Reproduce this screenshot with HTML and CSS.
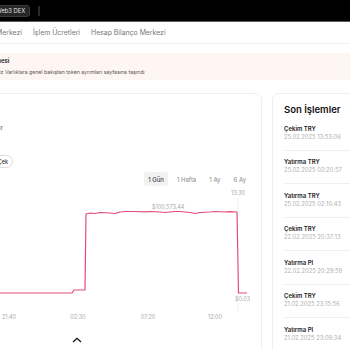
FILE: index.html
```html
<!DOCTYPE html>
<html lang="tr">
<head>
  <meta charset="UTF-8" />
  <title>Varlıklar</title>
  <link rel="stylesheet" href="styles.css">
</head>
<body>
  <!-- üst bar -->
  <header class="topbar">
    <button class="dex-btn">Web3 DEX</button>
    <span class="topbar-divider"></span>
  </header>

  <!-- sekmeler -->
  <nav class="tabs">
    <a href="#">Varlık Merkezi</a>
    <a href="#">İşlem Ücretleri</a>
    <a href="#">Hesap Bilanço Merkezi</a>
  </nav>

  <!-- bilgi bandı -->
  <div class="notice">
    <div class="notice-title">Güncellemesi</div>
    <div class="notice-text">Bakiyeniz Varlıklara genel bakıştan token ayrımları sayfasına taşındı</div>
  </div>

  <main class="content">
    <section class="card chart-card">
      <div class="balance-label">Toplam Varlıklar</div>
      <div class="action-row">
        <button class="pill">Yatır</button>
        <button class="pill">Çek</button>
      </div>
      <div class="range-row">
        <button class="range active">1 Gün</button>
        <button class="range">1 Hafta</button>
        <button class="range">1 Ay</button>
        <button class="range">6 Ay</button>
      </div>
      <svg class="chart" width="250" height="140" viewBox="0 0 250 140">
        <text x="238" y="9" text-anchor="middle" class="axis">13:30</text>
        <line x1="238" y1="12" x2="238" y2="25" stroke="#e6e6e6" stroke-width="0.8" />
        <text x="152" y="22.5" class="axis">$100,573.44</text>
        <path d="M0 107 L72 107 L74 104 L85 104 L86 28 L90 27 L95 27.5 L100 26.5 L110 27 L115 27.5 L120 26 L125 25.5 L135 25.5 L145 25.8 L150 25.5 L160 26 L165 26.5 L170 26 L175 25.5 L180 25.5 L190 26.5 L195 27.5 L200 26.5 L210 26 L215 25.5 L225 26 L230 25.6 L237 26 L238.5 107 L247 107"
              fill="none" stroke="#e24c74" stroke-width="1.2" stroke-linejoin="round" />
        <text x="235" y="114.5" class="axis">$0.03</text>
        <line x1="238" y1="117" x2="238" y2="126" stroke="#e6e6e6" stroke-width="0.8" />
        <text x="9" y="133" text-anchor="middle" class="axis">21:40</text>
        <text x="78" y="133" text-anchor="middle" class="axis">02:30</text>
        <text x="148" y="133" text-anchor="middle" class="axis">07:20</text>
        <text x="215" y="133" text-anchor="middle" class="axis">12:00</text>
      </svg>
      <button class="collapse-btn">
        <svg width="10" height="6" viewBox="0 0 10 6">
          <path d="M1 5 L5 1.3 L9 5" fill="none" stroke="#111" stroke-width="1.3" />
        </svg>
      </button>
    </section>

    <section class="card tx-card">
      <h3>Son İşlemler</h3>
      <ul class="tx-list">
        <li><p class="tx-type">Çekim TRY</p><p class="tx-date">25.02.2025 13:53:06</p></li>
        <li><p class="tx-type">Yatırma TRY</p><p class="tx-date">25.02.2025 03:20:57</p></li>
        <li><p class="tx-type">Yatırma TRY</p><p class="tx-date">25.02.2025 02:10:43</p></li>
        <li><p class="tx-type">Çekim TRY</p><p class="tx-date">22.02.2025 20:37:13</p></li>
        <li><p class="tx-type">Yatırma PI</p><p class="tx-date">22.02.2025 20:29:59</p></li>
        <li><p class="tx-type">Çekim TRY</p><p class="tx-date">21.02.2025 23:15:56</p></li>
        <li><p class="tx-type">Yatırma PI</p><p class="tx-date">21.02.2025 23:09:34</p></li>
      </ul>
    </section>
  </main>
</body>
</html>
```

FILE: styles.css
```css
body {
  font-family: Inter, 'Noto Sans', sans-serif;
  background-color: #fff;
  margin: 0;
  padding: 0;
  width: 350px;
  height: 350px;
  overflow: hidden;
  color: #222;
}

.topbar {
  height: 21px;
  background: #000;
  border-bottom: 1px solid #5a5a5a;
  display: flex;
  align-items: center;
  gap: 8px;
}

.dex-btn {
  margin-left: -9px;
  height: 12px;
  padding: 0 4px;
  background: #262626;
  border: 1px solid #3a3a3a;
  border-radius: 3px;
  color: #e0e0e0;
  font-family: Inter, sans-serif;
  font-size: 5.8px;
  line-height: 10px;
}

.topbar-divider {
  width: 2px;
  height: 10px;
  background: #2a2a2a;
}

.tabs {
  height: 21px;
  border-bottom: 1px solid #f0f0f0;
  display: flex;
  align-items: center;
  gap: 11px;
  margin-left: -24px;
}

.tabs a {
  color: #777;
  text-decoration: none;
  font-size: 6.9px;
  white-space: nowrap;
}

.notice {
  margin-top: 9px;
  height: 27px;
  box-sizing: border-box;
  padding-top: 4px;
  background: #fdf6f2;
  white-space: nowrap;
}

.notice-title {
  margin-left: -30px;
  font-size: 6px;
  font-weight: 600;
  line-height: 8px;
  color: #222;
}

.notice-text {
  margin-left: -20px;
  margin-top: 3px;
  font-size: 5.2px;
  line-height: 8px;
  color: #555;
}

.content {
  margin-top: 13px;
  margin-left: -20px;
  display: flex;
  gap: 10px;
  align-items: flex-start;
}

.card {
  flex: none;
  box-sizing: border-box;
  background: #fff;
  border: 1px solid #eeeeee;
  border-radius: 7px;
  height: 300px;
}

.chart-card {
  width: 282px;
  padding: 29px 11px 0 19px;
}

.balance-label {
  width: 100px;
  margin-left: -97px;
  text-align: right;
  white-space: nowrap;
  font-size: 6px;
  line-height: 10px;
  color: #666;
}

.action-row {
  width: 100px;
  margin-left: -87px;
  margin-top: 22px;
  display: flex;
  justify-content: flex-end;
  gap: 4px;
}

.pill {
  height: 13px;
  padding: 0 4px;
  border: 1px solid #dcdcdc;
  border-radius: 7px;
  background: #fff;
  font-family: Inter, sans-serif;
  font-size: 5.5px;
  color: #222;
}

.range-row {
  margin-top: 4px;
  display: flex;
  justify-content: flex-end;
  gap: 5px;
}

.range {
  height: 14px;
  padding: 0 4px;
  border: none;
  border-radius: 3px;
  background: none;
  font-family: Inter, sans-serif;
  font-size: 6px;
  color: #888;
}

.range.active {
  background: #f2f2f2;
  color: #222;
}

.chart {
  display: block;
}

.axis {
  font-family: Inter, sans-serif;
  font-size: 5.5px;
  fill: #aaa;
}

.collapse-btn {
  display: block;
  margin: 5px 0 0 72px;
  padding: 0;
  border: none;
  background: none;
  height: 8px;
}

.tx-card {
  width: 120px;
  padding: 10px 0 0 11px;
}

.tx-card h3 {
  margin: 0;
  font-size: 9.5px;
  line-height: 12px;
  font-weight: 600;
  color: #111;
}

.tx-list {
  list-style: none;
  margin: 1px 0 0;
  padding: 0;
}

.tx-list li {
  padding: 6.5px 0 9px;
  border-bottom: 1px solid #efefef;
}

.tx-list p {
  margin: 0;
  white-space: nowrap;
}

.tx-type {
  font-size: 6px;
  line-height: 9px;
  font-weight: 600;
  color: #222;
}

.tx-date {
  font-size: 5.8px;
  line-height: 8px;
  color: #b0b0b0;
}
```
